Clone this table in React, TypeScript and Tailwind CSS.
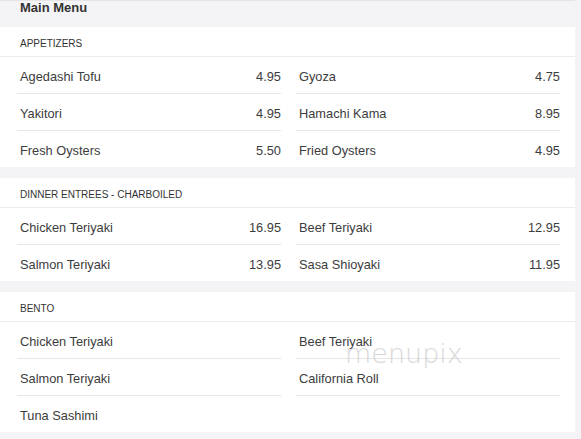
import React from "react";

type Item = { name: string; price?: string };
type Section = { title: string; items: Item[] };

const sections: Section[] = [
  {
    title: "APPETIZERS",
    items: [
      { name: "Agedashi Tofu", price: "4.95" },
      { name: "Gyoza", price: "4.75" },
      { name: "Yakitori", price: "4.95" },
      { name: "Hamachi Kama", price: "8.95" },
      { name: "Fresh Oysters", price: "5.50" },
      { name: "Fried Oysters", price: "4.95" },
    ],
  },
  {
    title: "DINNER ENTREES - CHARBOILED",
    items: [
      { name: "Chicken Teriyaki", price: "16.95" },
      { name: "Beef Teriyaki", price: "12.95" },
      { name: "Salmon Teriyaki", price: "13.95" },
      { name: "Sasa Shioyaki", price: "11.95" },
    ],
  },
  {
    title: "BENTO",
    items: [
      { name: "Chicken Teriyaki" },
      { name: "Beef Teriyaki" },
      { name: "Salmon Teriyaki" },
      { name: "California Roll" },
      { name: "Tuna Sashimi" },
    ],
  },
];

function SectionBlock({ s }: { s: Section }) {
  const rows: Item[][] = [];
  for (let i = 0; i < s.items.length; i += 2) rows.push(s.items.slice(i, i + 2));
  return (
    <div className="bg-white">
      <div className="h-[30px] flex items-center pt-[4px] pl-[20px] text-[10px] text-[#333] border-b border-[#ececec]">
        {s.title}
      </div>
      <div className="grid grid-cols-2 gap-x-[15px] pl-[17px] pr-[15px]">
        {rows.map((r, ri) =>
          [0, 1].map((ci) => {
            const it = r[ci];
            const last = ri === rows.length - 1;
            return (
              <div
                key={ri + "-" + ci}
                className={
                  "flex items-center justify-between pl-[3px] pt-[3px] text-[12.8px] text-[#3c3c3c] " +
                  (last ? "h-[36px]" : "h-[37px] border-b border-[#e6e6e6]") +
                  (it ? "" : " border-transparent")
                }
              >
                <span>{it ? it.name : ""}</span>
                <span>{it && it.price ? it.price : ""}</span>
              </div>
            );
          })
        )}
      </div>
    </div>
  );
}

export default function App() {
  return (
    <div
      className="w-[581px] h-[439px] bg-[#f4f4f6] overflow-hidden relative"
      style={{ fontFamily: '"Liberation Sans", Arial, sans-serif' }}
    >
      <div className="w-[575px] flex flex-col">
        <div className="h-[27px] pl-[20px] border-t border-[#e4e4e8]">
          <span className="block text-[13px] leading-[14px] font-bold text-[#333]">Main Menu</span>
        </div>
        <div className="flex flex-col gap-[11px]">
          {sections.map((s) => (
            <SectionBlock key={s.title} s={s} />
          ))}
        </div>
      </div>
      <div
        className="absolute left-[345px] top-[339px] text-[27px] leading-[30px] text-[#cfcfcf] opacity-80 pointer-events-none"
        style={{ fontFamily: '"DejaVu Sans", sans-serif', fontWeight: 200 }}
      >
        menupix
      </div>
    </div>
  );
}
